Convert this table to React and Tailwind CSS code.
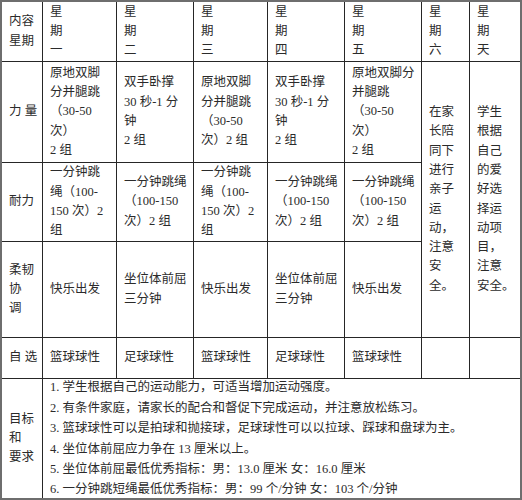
import React from 'react';

const FONT = { fontFamily: '"Liberation Serif", "Noto Sans CJK SC", serif' };

// 单元格：内容按行给出，垂直居中
function Cell({ lines, className = '', right = true, bottom = true }) {
  return (
    <div
      className={`flex flex-col justify-center pl-[7px] leading-[19.3px] text-[12.5px] text-[#2b2b2b] border-[#262626] ${
        right ? 'border-r' : ''
      } ${bottom ? 'border-b' : ''} ${className}`}
    >
      {lines.map((l, i) => (
        <div key={i} className="whitespace-nowrap">
          {l}
        </div>
      ))}
    </div>
  );
}

const header = [
  ['星', '期', '一'],
  ['星', '期', '二'],
  ['星', '期', '三'],
  ['星', '期', '四'],
  ['星', '期', '五'],
  ['星', '期', '六'],
];

const strength = [
  ['原地双脚', '分并腿跳', '（30-50', '次）', '2 组'],
  ['双手卧撑', '30 秒-1 分', '钟', '2 组'],
  ['原地双脚', '分并腿跳', '（30-50', '次）2 组'],
  ['双手卧撑', '30 秒-1 分', '钟', '2 组'],
  ['原地双脚分', '并腿跳', '（30-50', '次）', '2 组'],
];

const endurance = [
  ['一分钟跳', '绳（100-', '150 次）2', '组'],
  ['一分钟跳绳', '（100-150', '次）2 组'],
  ['一分钟跳', '绳（100-', '150 次）2', '组'],
  ['一分钟跳绳', '（100-150', '次）2 组'],
  ['一分钟跳绳', '（100-150', '次）2 组'],
];

const flex = [
  ['快乐出发'],
  ['坐位体前屈', '三分钟'],
  ['快乐出发'],
  ['坐位体前屈', '三分钟'],
  ['快乐出发'],
];

const select = ['篮球球性', '足球球性', '篮球球性', '足球球性', '篮球球性'];

const goals = [
  '1. 学生根据自己的运动能力，可适当增加运动强度。',
  '2. 有条件家庭，请家长的配合和督促下完成运动，并注意放松练习。',
  '3. 篮球球性可以是拍球和抛接球，足球球性可以以拉球、踩球和盘球为主。',
  '4. 坐位体前屈应力争在 13 厘米以上。',
  '5. 坐位体前屈最低优秀指标：男：13.0 厘米 女：16.0 厘米',
  '6. 一分钟跳短绳最低优秀指标：男：99 个/分钟 女：103 个/分钟',
];

export default function App() {
  return (
    <div className="w-[522px] h-[500px] bg-white" style={FONT}>
      <div className="w-[522px] h-[500px] border-2 border-[#6e6e6e] grid grid-cols-[41px_74px_77px_74px_77px_77px_48px_50px] grid-rows-[60px_101px_79px_96px_41px_119px]">
        {/* 表头 */}
        <Cell lines={['内容', '星期']} className="pl-[6px]" />
        {header.map((h, i) => (
          <Cell key={i} lines={h} />
        ))}
        <Cell lines={['星', '期', '天']} right={false} />

        {/* 力量 */}
        <Cell lines={['力 量']} className="pl-[6px]" />
        {strength.map((c, i) => (
          <Cell key={i} lines={c} />
        ))}
        <Cell
          className="row-span-3"
          lines={['在家', '长陪', '同下', '进行', '亲子', '运', '动，', '注意', '安', '全。']}
        />
        <Cell
          className="row-span-3"
          right={false}
          lines={['学生', '根据', '自己', '的爱', '好选', '择运', '动项', '目，', '注意', '安全。']}
        />

        {/* 耐力 */}
        <Cell lines={['耐力']} className="pl-[6px]" />
        {endurance.map((c, i) => (
          <Cell key={i} lines={c} />
        ))}

        {/* 柔韧协调 */}
        <Cell lines={['柔韧', '协', '调']} className="pl-[6px]" />
        {flex.map((c, i) => (
          <Cell key={i} lines={c} />
        ))}

        {/* 自选 */}
        <Cell lines={['自 选']} className="pl-[6px]" />
        {select.map((c, i) => (
          <Cell key={i} lines={[c]} />
        ))}
        <Cell lines={[]} />
        <Cell lines={[]} right={false} />

        {/* 目标和要求 */}
        <Cell lines={['目标', '和', '要求']} className="pl-[6px] leading-[18.5px]" bottom={false} />
        <Cell
          lines={goals}
          className="col-span-7 pl-[5px] leading-[20.4px]"
          right={false}
          bottom={false}
        />
      </div>
    </div>
  );
}
